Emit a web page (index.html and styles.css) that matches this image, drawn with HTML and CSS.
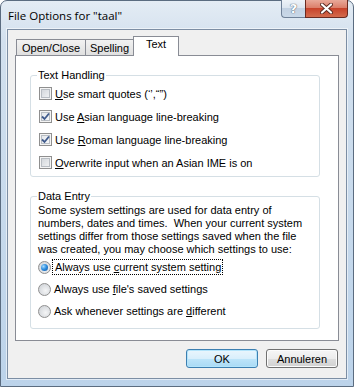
FILE: index.html
```html
<!DOCTYPE html>
<html lang="en">
<head>
    <meta charset="UTF-8">
    <title>File Options for "taal"</title>
    <link rel="stylesheet" href="styles.css">
</head>
<body>
    <div class="window">
        <div class="titlebar">
            <span class="title">File Options for "taal"</span>
            <div class="caption-buttons">
                <span class="cap help">?</span>
                <span class="cap close">
                    <svg width="13" height="11" viewBox="0 0 13 11">
                        <path d="M2 1.5 L11 9.5 M11 1.5 L2 9.5" stroke="#5a2a22" stroke-width="4" stroke-linecap="round"/>
                        <path d="M2 1.5 L11 9.5 M11 1.5 L2 9.5" stroke="#ffffff" stroke-width="2.2" stroke-linecap="round"/>
                    </svg>
                </span>
            </div>
        </div>

        <div class="client">
            <div class="tabs">
                <div class="tab tab-open">Open/Close</div>
                <div class="tab tab-spelling">Spelling</div>
                <div class="tab tab-text active">Text</div>
            </div>

            <div class="panel">
                <fieldset class="group text-handling">
                    <legend>Text Handling</legend>
                    <label class="option">
                        <span class="check"></span>
                        <span><u>U</u>se smart quotes (‘’,“”)</span>
                    </label>
                    <label class="option">
                        <span class="check checked">
                            <svg width="11" height="11" viewBox="0 0 11 11"><path d="M2 5.5 L4.5 8 L9 2.5" fill="none" stroke="#3f5a8c" stroke-width="1.8"/></svg>
                        </span>
                        <span>Use <u>A</u>sian language line-breaking</span>
                    </label>
                    <label class="option">
                        <span class="check checked">
                            <svg width="11" height="11" viewBox="0 0 11 11"><path d="M2 5.5 L4.5 8 L9 2.5" fill="none" stroke="#3f5a8c" stroke-width="1.8"/></svg>
                        </span>
                        <span>Use <u>R</u>oman language line-breaking</span>
                    </label>
                    <label class="option">
                        <span class="check"></span>
                        <span><u>O</u>verwrite input when an Asian IME is on</span>
                    </label>
                </fieldset>

                <fieldset class="group data-entry">
                    <legend>Data Entry</legend>
                    <p class="note">Some system settings are used for data entry of<br>numbers, dates and times.&nbsp; When your current system<br>settings differ from those settings saved when the file<br>was created, you may choose which settings to use:</p>
                    <label class="option radio-row">
                        <span class="radio selected"></span>
                        <span class="focus">Always use <u>c</u>urrent system setting</span>
                    </label>
                    <label class="option radio-row">
                        <span class="radio"></span>
                        <span>Always use <u>f</u>ile's saved settings</span>
                    </label>
                    <label class="option radio-row">
                        <span class="radio"></span>
                        <span>Ask whenever settings are <u>d</u>ifferent</span>
                    </label>
                </fieldset>
            </div>

            <div class="buttons">
                <button class="default">OK</button>
                <button>Annuleren</button>
            </div>
        </div>
    </div>
</body>
</html>
```

FILE: styles.css
```css
body {
    margin: 0;
    font-family: "Liberation Sans", Arial, sans-serif;
    font-size: 11px;
    color: #000;
}
.window {
    width: 354px;
    height: 387px;
    box-sizing: border-box;
    border: 1px solid #5b6c80;
    border-radius: 7px 7px 0 0;
    background: linear-gradient(to bottom, #e4ecf4 0%, #d2e0ee 40px, #bcd3ea 100%);
    padding: 0 6px 7px;
    display: flex;
    flex-direction: column;
}
.titlebar {
    height: 28px;
    display: flex;
    justify-content: space-between;
    align-items: flex-start;
}
.title {
    font-family: "Open Sans", "Noto Sans", sans-serif;
    font-size: 11.5px;
    line-height: 16px;
    margin-top: 7px;
    margin-left: 1px;
    color: #000;
}
.caption-buttons {
    display: flex;
    margin-top: -1px;
    margin-right: -1px;
}
.cap {
    height: 18px;
    box-sizing: border-box;
    display: flex;
    align-items: center;
    justify-content: center;
}
.help {
    width: 24px;
    border: 1px solid #6f8198;
    border-top: none;
    border-right: none;
    border-radius: 0 0 0 4px;
    background: linear-gradient(to bottom, #eef3f8 0%, #dde6f0 45%, #c2d1e2 50%, #c9d8e8 100%);
    font-family: "DejaVu Sans", sans-serif;
    font-size: 13px;
    font-weight: bold;
    color: #ffffff;
    text-shadow: 0 0 1px #4b5a6c, 0 0 1px #4b5a6c;
}
.close {
    width: 43px;
    border: 1px solid #6a2a20;
    border-top: none;
    border-radius: 0 0 4px 0;
    background: linear-gradient(to bottom, #e9a99a 0%, #dc7f6b 45%, #c8432b 50%, #d36b4d 100%);
}
.client {
    flex: 1;
    display: flex;
    flex-direction: column;
    background: #f0f0f0;
    border: 1px solid #7c8ea4;
    box-shadow: 0 0 0 1px rgba(255, 255, 255, 0.55);
    padding: 6px 7px 10px;
}
.tabs {
    display: flex;
    align-items: flex-end;
    height: 20px;
    padding-left: 1px;
}
.tab {
    box-sizing: border-box;
    height: 17px;
    line-height: 16px;
    text-align: center;
    border: 1px solid #898c95;
    border-bottom: none;
    margin-right: -1px;
    background: linear-gradient(to bottom, #f2f2f2, #dedede);
}
.tab-open {
    width: 70px;
}
.tab-spelling {
    width: 49px;
}
.tab-text {
    width: 46px;
}
.tab.active {
    position: relative;
    z-index: 1;
    height: 20px;
    line-height: 15px;
    background: #ffffff;
}
.panel {
    flex: 1;
    margin-top: -1px;
    border: 1px solid #898c95;
    background: #ffffff;
    padding: 0 18px 0 14px;
}
.group {
    margin: 12px 0 0;
    padding: 0 6px 2px;
    border: 1px solid #d5dfe5;
    border-radius: 3px;
}
.group legend {
    padding: 0 1px;
    line-height: 14px;
}
.data-entry {
    margin-top: 12px;
    padding-bottom: 6px;
}
.option {
    display: flex;
    align-items: center;
    height: 23px;
    white-space: nowrap;
}
.check {
    width: 13px;
    height: 13px;
    box-sizing: border-box;
    margin: 0 3px 0 2px;
    border: 1px solid #8f8f8f;
    background: linear-gradient(135deg, #cdd1d6, #f6f7f8);
    box-shadow: inset 0 0 0 1px #f4f4f4, inset 0 0 0 2px #b8bdc3;
    display: flex;
    align-items: center;
    justify-content: center;
}
.check.checked {
    background: linear-gradient(135deg, #dfe3e8, #fafbfc);
}
.note {
    margin: 1px 0 0 1px;
    line-height: 13px;
}
.radio-row {
    height: 22px;
}
.radio {
    width: 13px;
    height: 13px;
    box-sizing: border-box;
    margin: 0 3px 0 1px;
    border: 1px solid #8f8f8f;
    border-radius: 50%;
    background: radial-gradient(circle at 60% 60%, #f4f5f6 0%, #d6d9dd 70%, #e8e9ea 100%);
    display: flex;
    align-items: center;
    justify-content: center;
}
.radio.selected::after {
    content: "";
    width: 7px;
    height: 7px;
    border-radius: 50%;
    background: radial-gradient(circle at 35% 35%, #a9dcfd 0%, #2f8fe0 45%, #0d4f9e 100%);
}
.focus {
    outline: 1px dotted #000;
    outline-offset: 1px;
    padding-left: 1px;
}
.buttons {
    display: flex;
    justify-content: flex-end;
    gap: 8px;
    margin-top: 8px;
    padding-right: 1px;
}
button {
    width: 72px;
    height: 19px;
    font-family: "Liberation Sans", Arial, sans-serif;
    font-size: 11px;
    color: #000;
    border: 1px solid #707070;
    border-radius: 3px;
    background: linear-gradient(to bottom, #f6f6f6 0%, #ececec 50%, #dedede 50%, #d2d2d2 100%);
    box-shadow: inset 0 0 0 1px #fcfcfc;
    padding: 0;
}
button.default {
    border-color: #3c7fb1;
    background: linear-gradient(to bottom, #eaf6fd 0%, #d9effc 50%, #bee5fa 50%, #a9daf5 100%);
    box-shadow: inset 0 0 0 1px #b3e4fb;
}
```
